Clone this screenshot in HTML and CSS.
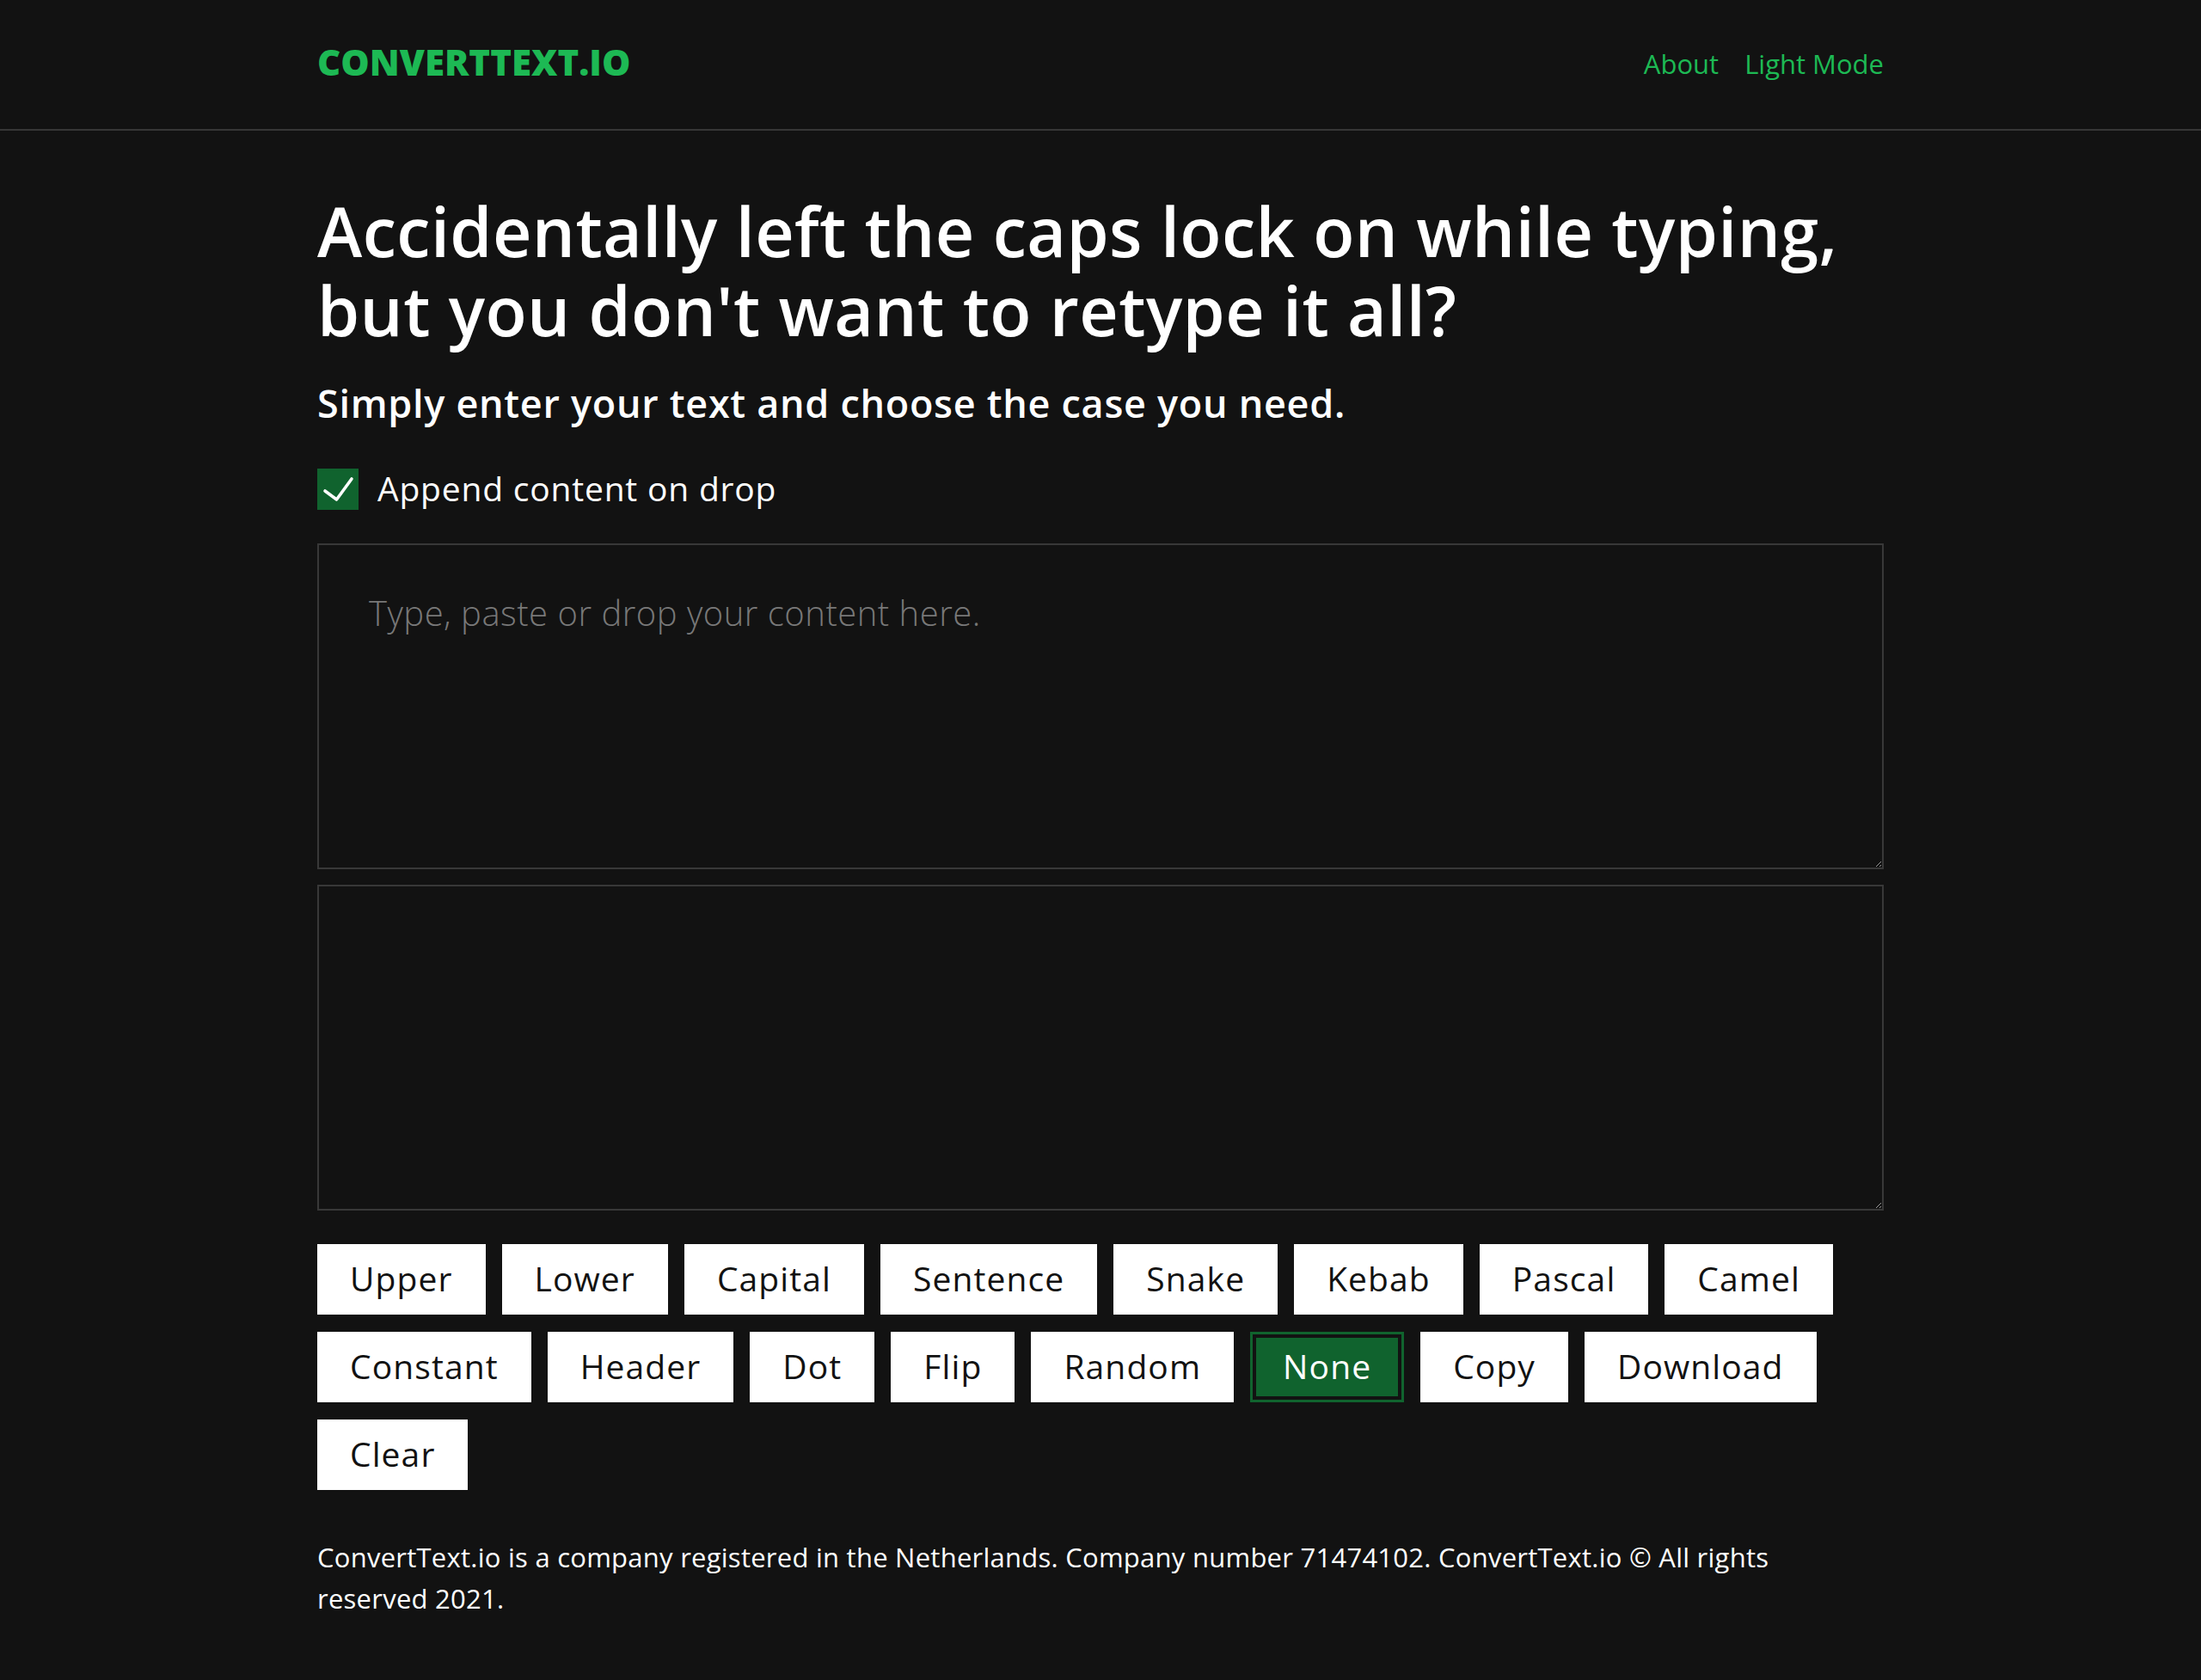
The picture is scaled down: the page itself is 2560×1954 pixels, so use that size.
FILE: index.html
```html
<!DOCTYPE html>
<html lang="en">
<head>
<meta charset="utf-8">
<title>ConvertText.io</title>
<link rel="stylesheet" href="styles.css">
</head>
<body>
<header class="site-header">
  <div class="container header-inner">
    <a class="logo" href="#">CONVERTTEXT.IO</a>
    <nav class="nav">
      <a href="#">About</a>
      <a href="#">Light Mode</a>
    </nav>
  </div>
</header>
<main class="container main">
  <h1 class="title">Accidentally left the caps lock on while typing, but you don't want to retype it all?</h1>
  <h2 class="subtitle">Simply enter your text and choose the case you need.</h2>
  <label class="append">
    <input type="checkbox" class="append-input" checked>
    <span class="box"><svg viewBox="0 0 48 48" width="48" height="48"><path d="M9 26 L22.5 36 L40 12" fill="none" stroke="#fff" stroke-width="3.6" stroke-linecap="round" stroke-linejoin="round"/></svg></span>
    <span class="append-text">Append content on drop</span>
  </label>
  <textarea class="field field-input" placeholder="Type, paste or drop your content here."></textarea>
  <textarea class="field field-output"></textarea>
  <div class="buttons">
    <button class="btn">Upper</button>
    <button class="btn">Lower</button>
    <button class="btn">Capital</button>
    <button class="btn">Sentence</button>
    <button class="btn">Snake</button>
    <button class="btn">Kebab</button>
    <button class="btn">Pascal</button>
    <button class="btn">Camel</button>
    <button class="btn">Constant</button>
    <button class="btn">Header</button>
    <button class="btn">Dot</button>
    <button class="btn">Flip</button>
    <button class="btn">Random</button>
    <button class="btn btn-active">None</button>
    <button class="btn">Copy</button>
    <button class="btn">Download</button>
    <button class="btn">Clear</button>
  </div>
  <footer class="footer">
    <p>ConvertText.io is a company registered in the Netherlands. Company number 71474102. ConvertText.io © All rights reserved 2021.</p>
  </footer>
</main>
</body>
</html>
```
FILE: styles.css
```css
html, body {
  margin: 0;
  padding: 0;
  background: #121212;
  color: #ffffff;
  font-family: "Open Sans", "Liberation Sans", sans-serif;
}

.container {
  width: 1822px;
  margin: 0 auto;
}

.site-header {
  height: 150px;
  border-bottom: 2px solid #363636;
}

.header-inner {
  height: 150px;
  box-sizing: border-box;
  padding-bottom: 6px;
  display: flex;
  align-items: center;
  justify-content: space-between;
}

.logo {
  color: #1db954;
  font-weight: 800;
  font-size: 42px;
  line-height: 1;
  text-decoration: none;
  letter-spacing: 0;
}

.nav {
  display: flex;
  gap: 30px;
  padding-top: 4px;
}

.nav a {
  color: #1db954;
  font-size: 31px;
  font-weight: 400;
  text-decoration: none;
  line-height: 1;
}

.main {
  padding-top: 71px;
  padding-bottom: 72px;
}

.title {
  margin: 0;
  font-size: 79px;
  font-weight: 600;
  line-height: 92px;
  letter-spacing: 0.4px;
}

.subtitle {
  margin: 32px 0 0;
  font-size: 45px;
  font-weight: 600;
  line-height: 60px;
  letter-spacing: 0.7px;
}

.append {
  margin-top: 46px;
  height: 48px;
  display: flex;
  align-items: center;
  gap: 22px;
  cursor: pointer;
}

.append-input {
  position: absolute;
  opacity: 0;
  width: 0;
  height: 0;
  margin: 0;
}

.box {
  width: 48px;
  height: 48px;
  background: #10632e;
  display: block;
  flex: none;
}

.box svg {
  display: block;
}

.append-text {
  font-size: 39px;
  line-height: 48px;
  letter-spacing: 0.8px;
  padding-bottom: 2px;
}

.field {
  display: block;
  width: 100%;
  height: 379px;
  box-sizing: border-box;
  background: #121212;
  border: 2px solid #383838;
  border-radius: 0;
  color: #ffffff;
  font-family: "Open Sans", "Liberation Sans", sans-serif;
  font-size: 40px;
  font-weight: 300;
  line-height: 58px;
  letter-spacing: 0.5px;
  padding: 50px 58px;
  outline: none;
}

.field::placeholder {
  color: #787878;
}

.field-input {
  margin-top: 39px;
}

.field-output {
  margin-top: 18px;
}

.buttons {
  margin-top: 39px;
  display: flex;
  flex-wrap: wrap;
  gap: 20px 19px;
}

.btn {
  height: 82px;
  box-sizing: border-box;
  padding: 0 38px 4px;
  background: #ffffff;
  color: #121212;
  border: 0;
  border-radius: 0;
  font-family: "Open Sans", "Liberation Sans", sans-serif;
  font-size: 39px;
  font-weight: 400;
  letter-spacing: 1.1px;
  line-height: 1;
  cursor: pointer;
}

.btn-active {
  background: #10632e;
  color: #ffffff;
  border: 3px solid #10632e;
  box-shadow: inset 0 0 0 4px #121212;
  padding: 0 35px 4px;
}

.footer {
  margin-top: 54px;
}

.footer p {
  margin: 0;
  max-width: 1800px;
  font-size: 31px;
  line-height: 48px;
  letter-spacing: 0.25px;
}
```
